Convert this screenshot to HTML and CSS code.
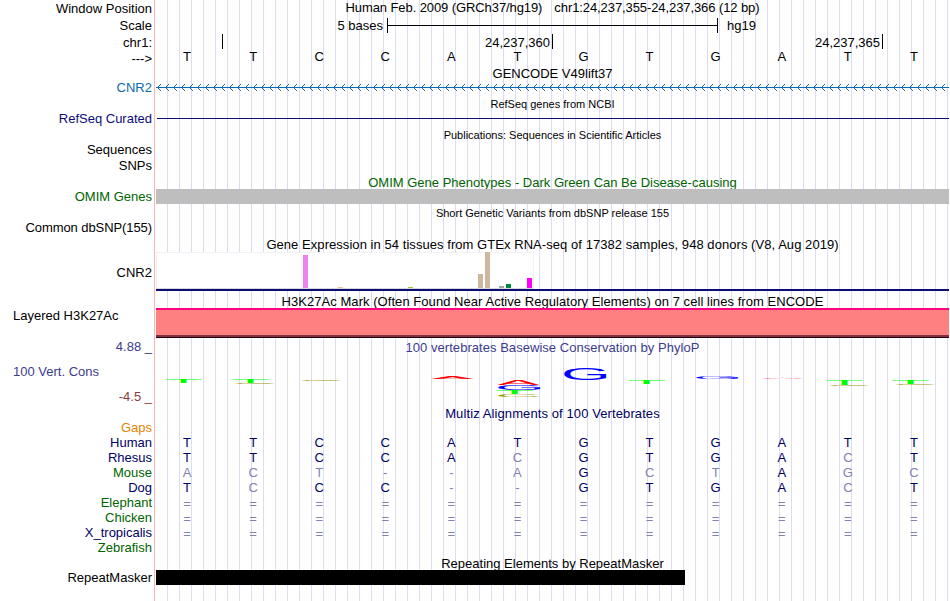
FILE: index.html
```
<!DOCTYPE html>
<html lang="en">
    <head>
        <meta charset="utf-8">
        <title>Human chr1:24,237,355-24,237,366</title>
        <link rel="stylesheet" href="styles.css">
    </head>
    <body>
        <div class="browser">
            <div class="row position">
                <div class="label">Window Position</div>
                <div class="track title t-pos"><span>Human Feb. 2009 (GRCh37/hg19)</span><span class="range">chr1:24,237,355-24,237,366 (12 bp)</span></div>
            </div>
            <div class="row scale">
                <div class="label">Scale</div>
                <div class="track ruler">
                    <span class="bases">5 bases</span>
                    <span class="line"></span>
                    <span>hg19</span>
                </div>
            </div>
            <div class="row chrom">
                <div class="label">chr1:</div>
                <div class="track ticks">
                    <span class="tick first"></span>
                    <span class="tick">24,237,360</span>
                    <span class="tick">24,237,365</span>
                </div>
            </div>
            <div class="row strand">
                <div class="label">---&gt;</div>
                <div class="track bases-row" data-seq="TTCCATGTGATT"></div>
            </div>

            <div class="title t-gencode">GENCODE V49lift37</div>
            <div class="row gencode">
                <div class="label">CNR2</div>
                <div class="track">
                    <svg width="793" height="15" shape-rendering="crispEdges">
                        <defs>
                            <pattern id="chevron" width="8" height="15" patternUnits="userSpaceOnUse">
                                <path d="M0 6h8v1h-8zM1 6h1v1h-1zM2 5h1v3h-1zM3 4h1v1h-1zM3 8h1v1h-1zM4 3h1v1h-1zM4 9h1v1h-1z" fill="#0c6aae"/>
                            </pattern>
                        </defs>
                        <rect width="793" height="15" fill="url(#chevron)"/>
                    </svg>
                </div>
            </div>

            <div class="title small t-refseq">RefSeq genes from NCBI</div>
            <div class="row refseq">
                <div class="label">RefSeq Curated</div>
                <div class="track"><div class="gene-line"></div></div>
            </div>

            <div class="title small t-pubs">Publications: Sequences in Scientific Articles</div>
            <div class="row pubs"><div class="label">Sequences</div></div>
            <div class="row snps"><div class="label">SNPs</div></div>

            <div class="title green t-omim">OMIM Gene Phenotypes - Dark Green Can Be Disease-causing</div>
            <div class="row omim">
                <div class="label">OMIM Genes</div>
                <div class="track"></div>
            </div>

            <div class="title small t-dbsnp">Short Genetic Variants from dbSNP release 155</div>
            <div class="row dbsnp"><div class="label">Common dbSNP(155)</div></div>

            <div class="title t-gtex">Gene Expression in 54 tissues from GTEx RNA-seq of 17382 samples, 948 donors (V8, Aug 2019)</div>
            <div class="row gtex">
                <div class="label">CNR2</div>
                <div class="track">
                    <svg width="378" height="37" shape-rendering="crispEdges">
                        <rect width="378" height="37" fill="#f2f2f2"/>
                        <rect x="1" y="1" width="376" height="35" fill="#fff"/>
                        <rect y="36" width="377" height="1" fill="#d8d8d8"/>
                        <rect x="147" y="3" width="5" height="33" fill="#ee82ee"/>
                        <rect x="182" y="35" width="5" height="1" fill="#eec591"/>
                        <rect x="252" y="35" width="5" height="1" fill="#9acd32"/>
                        <rect x="322" y="22" width="5" height="14" fill="#cdb79e"/>
                        <rect x="329" y="0" width="5" height="36" fill="#cdb79e"/>
                        <rect x="343" y="34" width="5" height="2" fill="#a6a6a6"/>
                        <rect x="350" y="32" width="5" height="4" fill="#008b45"/>
                        <rect x="371" y="26" width="5" height="10" fill="#ff00ff"/>
                    </svg>
                </div>
            </div>

            <div class="title t-h3k">H3K27Ac Mark (Often Found Near Active Regulatory Elements) on 7 cell lines from ENCODE</div>
            <div class="row h3k">
                <div class="label">Layered H3K27Ac</div>
                <div class="track"></div>
            </div>

            <div class="row phylop">
                <div class="label">
                    <span class="max">4.88 _</span>
                    <span class="name">100 Vert. Cons</span>
                    <span class="min">-4.5 _</span>
                </div>
                <div class="track">
                    <div class="title t-phylop">100 vertebrates Basewise Conservation by PhyloP</div>
                    <svg id="logo" width="793" height="50" viewBox="156 356 793 50"></svg>
                </div>
            </div>

            <div class="title navy t-multiz">Multiz Alignments of 100 Vertebrates</div>
            <div class="row gaps species"><div class="label">Gaps</div></div>
            <div class="row species navy"><div class="label">Human</div><div class="track bases-row" data-seq="TTCCATGTGATT"></div></div>
            <div class="row species navy"><div class="label">Rhesus</div><div class="track bases-row" data-seq="TTCCAcGTGAcT"></div></div>
            <div class="row species green"><div class="label">Mouse</div><div class="track bases-row" data-seq="act--aGctAgc"></div></div>
            <div class="row species navy"><div class="label">Dog</div><div class="track bases-row" data-seq="TcCC--GTGAcT"></div></div>
            <div class="row species green"><div class="label">Elephant</div><div class="track bases-row" data-seq="============"></div></div>
            <div class="row species green"><div class="label">Chicken</div><div class="track bases-row" data-seq="============"></div></div>
            <div class="row species navy"><div class="label">X_tropicalis</div><div class="track bases-row" data-seq="============"></div></div>
            <div class="row species green"><div class="label">Zebrafish</div></div>

            <div class="title t-rmsk">Repeating Elements by RepeatMasker</div>
            <div class="row rmsk">
                <div class="label">RepeatMasker</div>
                <div class="track"><div class="repeat"></div></div>
            </div>
        </div>
        <script>
            // lower case = differs from human, drawn lighter
            document.querySelectorAll(".bases-row").forEach(function (row) {
                row.dataset.seq.split("").forEach(function (c) {
                    var cell = document.createElement("span");
                    cell.textContent = c.toUpperCase();
                    if (c == c.toLowerCase()) cell.className = "diff";
                    if (c == "=") cell.className = "diff gap";
                    row.appendChild(cell);
                });
            });

            // letter, left, top, height
            var letters = [
                ["T", 164, 380.2, 3.2],
                ["T", 231, 380.2, 3.2], ["C", 232, 383.2, 0.9],
                ["C", 298, 380.1, 0.8],
                ["A", 431, 377.4, 2],
                ["A", 497, 380.3, 4.6], ["G", 495, 385, 5], ["T", 495, 390.2, 3.8], ["C", 495, 394.2, 3],
                ["G", 561, 368, 12],
                ["T", 627, 380.2, 4],
                ["G", 693, 376, 3],
                ["A", 761, 377.3, 1.5],
                ["T", 825, 380.2, 5], ["C", 826, 385.1, 0.8],
                ["T", 891, 380.2, 4], ["C", 892, 384.1, 0.8]
            ];
            var logo = document.getElementById("logo");
            letters.forEach(function (l) {
                var t = document.createElementNS("http://www.w3.org/2000/svg", "text");
                t.textContent = l[0];
                t.setAttribute("class", "logo-" + l[0]);
                t.setAttribute("transform", "translate(" + l[1] + " " + (l[2] + l[3]) + ") scale(0.64 " + l[3] / 69 + ")");
                logo.appendChild(t);
            });
        </script>
    </body>
</html>
```
FILE: styles.css
```
body {
    margin: 0;
    background: #fff;
    font-family: "Liberation Sans", Arial, sans-serif;
    font-size: 13px;
    color: #000;
}
.browser {
    width: 949px;
    height: 601px;
    overflow: hidden;
    background:
        linear-gradient(#ffb4b4, #ffb4b4) 154px 0 / 1px 100% no-repeat,
        repeating-linear-gradient(to right, transparent 0 11px, #dcdcf5 11px 12px) 156px 0 no-repeat;
}
.row {
    display: flex;
    height: 15px;
    line-height: 15px;
}
.label {
    flex: none;
    width: 152px;
    margin-right: 4px;
    line-height: 13px;
    text-align: right;
    white-space: nowrap;
}
.track {
    flex: none;
    width: 793px;
}
.track svg {
    display: block;
}
.title {
    height: 15px;
    line-height: 15px;
    margin-left: 156px;
    text-align: center;
    white-space: nowrap;
}
.track.title, .track .title {
    margin-left: 0;
}
.small {
    font-size: 11px;
}
.green {
    color: #006400;
}
.navy {
    color: #000064;
}

/* header */
.position {
    height: 17px;
}
.position .label, .scale .label, .chrom .label, .strand .label {
    line-height: 17px;
}
.track.t-pos {
    line-height: 16px;
    letter-spacing: -.09px;
}
.range {
    margin-left: 12px;
}
.scale {
    height: 17px;
    line-height: 17px;
}
.ruler {
    display: flex;
    align-items: center;
}
.bases {
    width: 227px;
    margin-right: 4px;
    text-align: right;
}
.line {
    width: 329px;
    height: 15px;
    margin-right: 9px;
    border: solid #000;
    border-width: 0 1px;
    background: linear-gradient(#000, #000) 0 7px / 100% 1px no-repeat;
}
.chrom {
    height: 16px;
    line-height: 17px;
}
.ticks {
    display: flex;
}
.tick {
    box-sizing: border-box;
    width: 330px;
    height: 15px;
    padding-right: 2px;
    border-right: 1px solid #000;
    text-align: right;
}
.first {
    width: 67px;
}
.bases-row {
    display: flex;
}
.bases-row span {
    width: 66.08px;
    padding-right: 4px;
    box-sizing: border-box;
    text-align: center;
}
.bases-row .diff {
    color: #8282b4;
}
.bases-row .gap {
    line-height: 17px;
}
.strand {
    height: 16px;
}
.strand .bases-row {
    line-height: 14px;
}

/* gene tracks */
.gencode {
    color: #0c6aae;
}
.t-refseq {
    margin-top: 1px;
}
.refseq {
    color: #0c0c78;
}
.gene-line {
    height: 1px;
    margin: 6px 0 0 1px;
    background: #0c0c78;
}
.t-pubs {
    margin-top: 1px;
}
.snps {
    margin-top: 1px;
}
.t-omim {
    margin-top: 1px;
    height: 14px;
}
.omim .label {
    line-height: 15px;
    color: #006400;
}
.omim .track {
    background: #bebebe;
}
.t-dbsnp {
    margin-top: 2px;
}
.dbsnp .label {
    letter-spacing: -.08px;
}
.t-gtex {
    margin-top: 1px;
    letter-spacing: .055px;
}
.gtex {
    height: 39px;
}
.gtex .label {
    line-height: 41px;
}
.gtex .track {
    height: 37px;
    border-bottom: 2px solid #0c0c78;
}
.t-h3k {
    margin-top: 3px;
    height: 14px;
    letter-spacing: .05px;
}
.h3k {
    height: 30px;
}
.h3k .label {
    box-sizing: border-box;
    padding-left: 13px;
    line-height: 15px;
    text-align: left;
}
.h3k .track {
    background: linear-gradient(#ff0080 0 2px, #ff8080 2px 27px, #803040 27px 29px, #200010 29px);
}

/* conservation */
.phylop {
    height: 66px;
    color: #3c3c8c;
}
.phylop .label {
    display: flex;
    flex-direction: column;
    line-height: 15px;
}
.phylop .max {
    margin-top: 1px;
}
.phylop .name {
    margin: 10px 0 10px 13px;
    text-align: left;
}
.phylop .min {
    color: #8c3c3c;
}
.t-phylop {
    padding: 2px 0 1px;
    letter-spacing: .04px;
}
#logo {
    font-size: 100px;
}
.logo-A {
    fill: #f00;
}
.logo-C {
    fill: #969600;
}
.logo-G {
    fill: #00f;
}
.logo-T {
    fill: #0f0;
}

/* alignments */
.t-multiz {
    margin-top: 2px;
    height: 14px;
    letter-spacing: .1px;
}
.gaps {
    color: #e68200;
}
.species .label {
    line-height: 15px;
}
.species .bases-row {
    color: #000064;
}
.t-rmsk {
    margin-top: 1px;
    height: 14px;
}
.rmsk .label {
    line-height: 15px;
}
.repeat {
    width: 529px;
    height: 15px;
    background: #000;
}
```
